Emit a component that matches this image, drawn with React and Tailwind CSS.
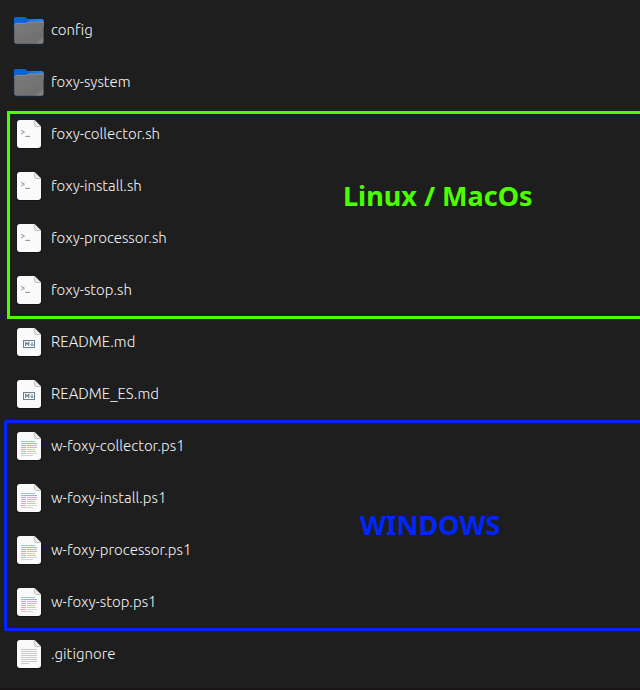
import { useId } from "react";

function FolderIcon() {
  const id = useId();
  return (
    <svg width="32" height="32" viewBox="0 0 32 32" aria-hidden="true">
      <defs>
        <linearGradient id={id + "b"} x1="0" y1="0" x2="1" y2="0">
          <stop offset="0" stopColor="#0a66d4" />
          <stop offset="0.4" stopColor="#0860cc" />
          <stop offset="0.55" stopColor="#1272e0" />
          <stop offset="1" stopColor="#2a8af2" />
        </linearGradient>
        <linearGradient id={id + "g"} x1="0" y1="0" x2="1" y2="1">
          <stop offset="0" stopColor="#7a7a7a" />
          <stop offset="0.84" stopColor="#707070" />
          <stop offset="0.85" stopColor="#7c7c7c" />
          <stop offset="1" stopColor="#858585" />
        </linearGradient>
      </defs>
      <path d="M1 5Q1 3 3 3H11.500Q12.500 3 13.300 3.800L14.600 5H29Q31.300 5 31.300 7.300V28Q31.300 30.800 28.500 30.800H3.500Q.7 30.800 .7 28Z" fill="#151515" />
      <path d="M.8 5Q.8 3 2.800 3H11.500Q12.500 3 13.300 3.800L14.600 5H28.700Q31 5 31 7.300V27.700Q31 30.400 28.300 30.400H3.500Q.8 30.400 .8 27.700Z" fill="#1c3a5c" />
      <path d="M1 5Q1 3 2.800 3H11.500Q12.500 3 13.300 3.800L14.600 4.900H28.500Q30.900 4.900 30.900 7.300V13H1Z" fill={`url(#${id}b)`} />
      <path d="M1.300 11.500Q1.300 9 3.800 9H12.500Q13.300 9 14 8.500L14.600 8.100Q15.100 7.800 16 7.800H28.200Q30.500 7.800 30.500 10.100V27.400Q30.500 29.800 28 29.800H3.800Q1.300 29.800 1.300 27.400Z" fill={`url(#${id}g)`} />
      <path d="M1.800 10.500Q2.300 9.300 3.800 9.300H12.600Q13.500 9.300 14.200 8.800L14.800 8.400Q15.300 8.100 16 8.100H28.200Q29.600 8.100 30.100 9.100" fill="none" stroke="#989898" strokeWidth=".6" />
    </svg>
  );
}

function Page({ children }) {
  return (
    <svg width="32" height="32" viewBox="0 0 32 32" aria-hidden="true">
      <path d="M6.500 2H21.500L28.500 9V28Q28.500 30.800 26 30.800H6.200Q3.600 30.800 3.600 28V5Q3.600 2 6.500 2Z" fill="#121212" />
      <path d="M7 2H21.500L28 8.500V27Q28 30 25 30H7Q4 30 4 27V5Q4 2 7 2Z" fill="#fafafa" />
      <path d="M21.500 2V6.500Q21.500 8.500 23.500 8.500H28Z" fill="#e8e8e8" />
      <path d="M21.500 2.500V6.500Q21.500 8.500 23.500 8.500H27.500" fill="none" stroke="#bcbcbc" strokeWidth=".9" />
      {children}
    </svg>
  );
}

function ShellIcon() {
  return (
    <Page>
      <path d="M8 12.400L11.500 14.200L8 16" fill="none" stroke="#959595" strokeWidth="1" />
      <path d="M12.300 18.400H17" stroke="#8c8c8c" strokeWidth="1" />
    </Page>
  );
}

function MarkdownIcon() {
  return (
    <Page>
      <g fill="none" stroke="#6b8090">
        <rect x="10.500" y="14.500" width="11" height="7" />
        <path d="M12.700 20V16.400L14.200 18.200L15.700 16.400V20" strokeWidth="1.100" />
        <path d="M19 16V19.600M17.500 18.300L19 19.900L20.500 18.300" strokeWidth="1" />
      </g>
    </Page>
  );
}

const codeLines = [
  [11.5, "#a4b9ef", 14, "#a4b9ef"],
  [13.5, "#9db9ee", 16, "#8fb2ec"],
  [15.5, "#b2a0e4", 16, "#d3a6e5"],
  [17.5, "#bfa4e0", 16, "#e0a8e0"],
  [19.5, "#e89eaa", 14, "#b9dc9c"],
  [21.5, "#f0a3a3", 15, "#b6dba0"],
  [23.5, "#f0a5a5", 16, "#d8d8d8"],
  [25.5, "#d5d5d5", 12, "#d5d5d5"],
];

function ScriptIcon() {
  return (
    <Page>
      {codeLines.map(([y, left, width, right]) => (
        <g key={y} fill="none" strokeWidth="1">
          <path d={`M8 ${y}h5`} stroke={left} />
          <path d={`M${y < 14 || y > 25 ? 13 : 14} ${y}H${8 + width}`} stroke={right} />
        </g>
      ))}
    </Page>
  );
}

function TextIcon() {
  return (
    <Page>
      <path d="M8 11.500H24M8 13.500H24M8 15.500H24M8 17.500H24M8 19.500H24M8 21.500H24M8 23.500H24M8 25.500H16" stroke="#c4c4c4" strokeWidth=".9" />
    </Page>
  );
}

function FileList({ icon: Icon, names }) {
  return (
    <ul>
      {names.map((name) => (
        <li key={name} className="flex h-13 items-center gap-1.5 pl-[13px]">
          <Icon />
          <span className="text-[15px] leading-5">{name}</span>
        </li>
      ))}
    </ul>
  );
}

export default function App() {
  return (
    <main className="min-h-screen overflow-hidden border-b-2 border-[#1a1517] bg-[#1e1e1e] pt-1 font-['Ubuntu','Noto_Sans',sans-serif] font-light text-[#f4f4f4]">
      <FileList icon={FolderIcon} names={["config", "foxy-system"]} />
      <section className="relative">
        <FileList
          icon={ShellIcon}
          names={["foxy-collector.sh", "foxy-install.sh", "foxy-processor.sh", "foxy-stop.sh"]}
        />
        <div className="pointer-events-none absolute -right-1 -bottom-[3px] left-[7px] top-[3px] border-3 border-[#4cff00]" />
        <h2 className="absolute left-[343px] top-[70px] font-['Noto_Sans',sans-serif] text-[27px] leading-9 font-bold text-[#4cff00]">
          Linux / MacOs
        </h2>
      </section>
      <FileList icon={MarkdownIcon} names={["README.md", "README_ES.md"]} />
      <section className="relative">
        <FileList
          icon={ScriptIcon}
          names={["w-foxy-collector.ps1", "w-foxy-install.ps1", "w-foxy-processor.ps1", "w-foxy-stop.ps1"]}
        />
        <div className="pointer-events-none absolute -right-1 -bottom-[3px] left-1 top-0 rounded-xs border-3 border-[#0026ff]" />
        <h2 className="absolute left-[360px] top-[87px] font-['Noto_Sans',sans-serif] text-[27px] leading-9 font-bold text-[#0026ff]">
          WINDOWS
        </h2>
      </section>
      <FileList icon={TextIcon} names={[".gitignore"]} />
    </main>
  );
}
